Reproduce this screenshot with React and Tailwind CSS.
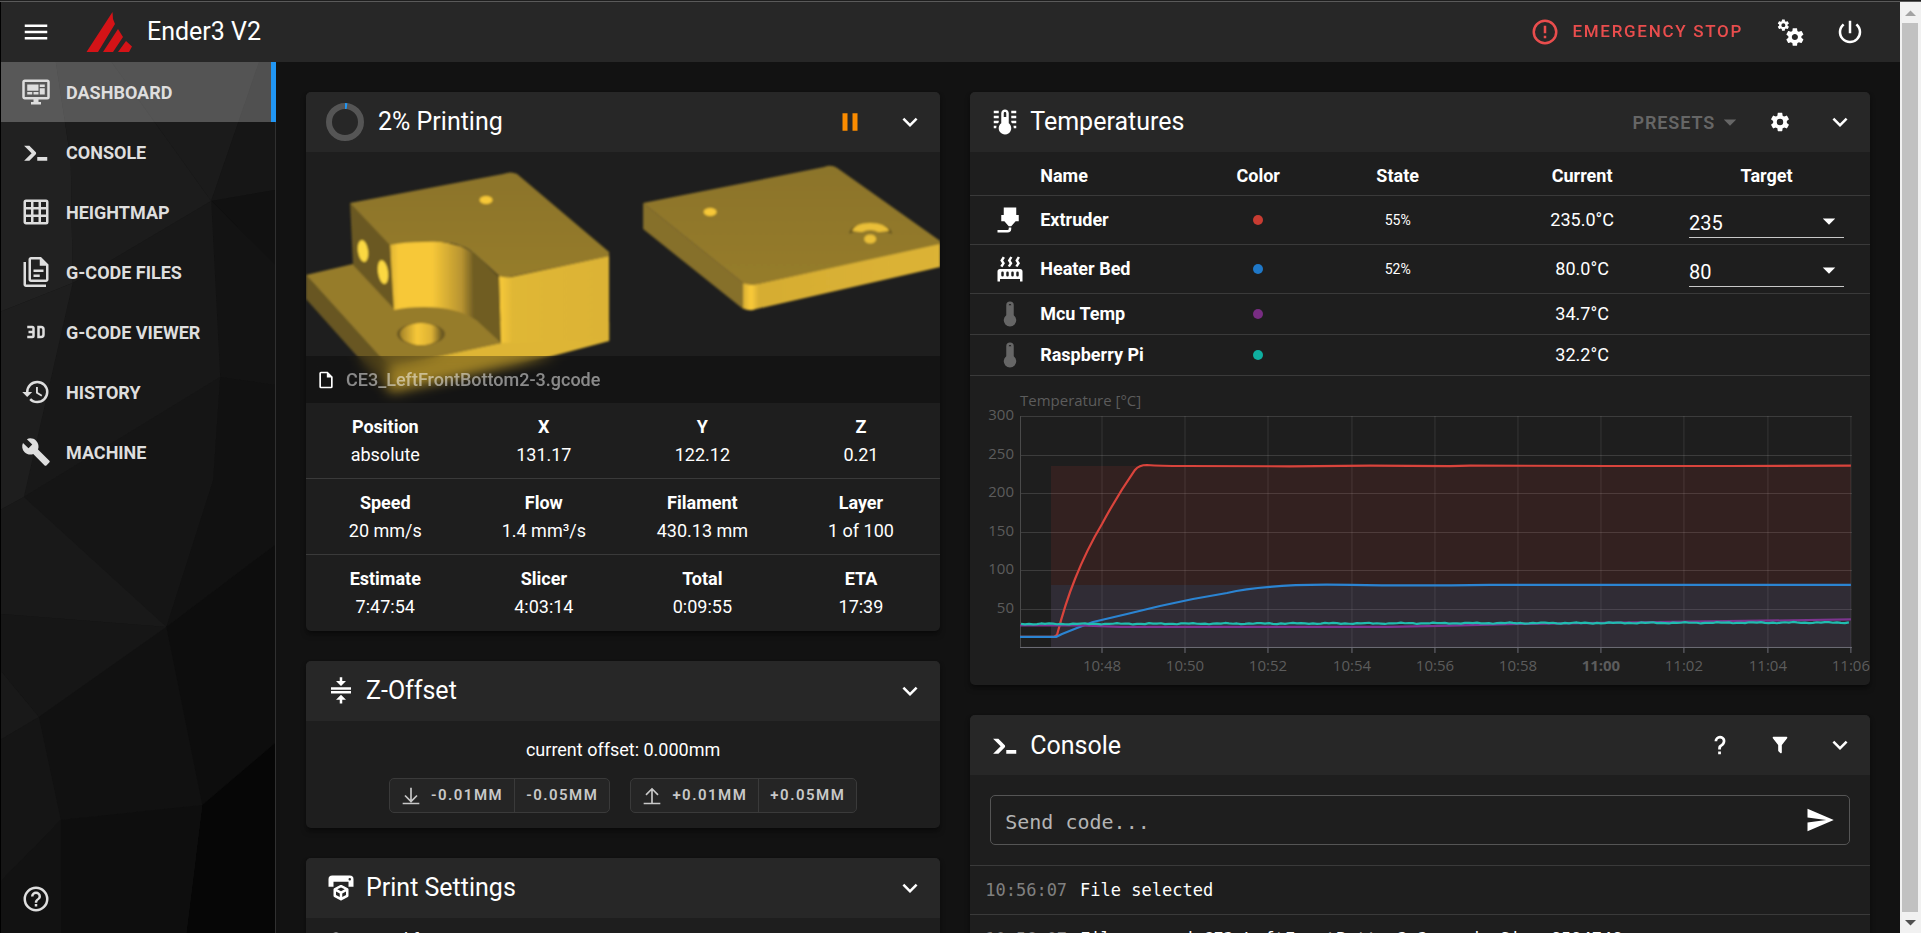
import React from "react";

const icons = {
  menu: "M3,6H21V8H3V6M3,11H21V13H3V11M3,16H21V18H3V16Z",
  dashboard:
    "M21,16V4H3V16H21M21,2A2,2 0 0,1 23,4V16A2,2 0 0,1 21,18H14V20H16V22H8V20H10V18H3C1.89,18 1,17.1 1,16V4C1,2.89 1.89,2 3,2H21M5,6H14V11H5V6M15,6H19V8H15V6M19,9V14H15V9H19M5,12H9V14H5V12M10,12H14V14H10V12Z",
  console:
    "M13,19V16H21V19H13M8.5,13L2.47,7H6.71L11.67,11.95C12.25,12.54 12.25,13.5 11.67,14.07L6.74,19H2.5L8.5,13Z",
  grid: "M10,4V8H14V4H10M16,4V8H20V4H16M16,10V14H20V10H16M16,16V20H20V16H16M14,20V16H10V20H14M8,20V16H4V20H8M8,14V10H4V14H8M8,8V4H4V8H8M10,14H14V10H10V14M4,2H20A2,2 0 0,1 22,4V20A2,2 0 0,1 20,22H4C2.92,22 2,21.1 2,20V4A2,2 0 0,1 4,2Z",
  files:
    "M16 0H8C6.9 0 6 .9 6 2V18C6 19.1 6.9 20 8 20H20C21.1 20 22 19.1 22 18V6L16 0M20 18H8V2H15V7H20V18M4 4V22H20V24H4C2.9 24 2 23.1 2 22V4H4M10 10V12H18V10H10M10 14V16H15V14H10Z",
  video3d:
    "M5,7H9A2,2 0 0,1 11,9V15A2,2 0 0,1 9,17H5V15H9V13H6V11H9V9H5V7M13,7H16A3,3 0 0,1 19,10V14A3,3 0 0,1 16,17H13V7M16,15A1,1 0 0,0 17,14V10A1,1 0 0,0 16,9H15V15H16Z",
  history:
    "M13.5,8H12V13L16.28,15.54L17,14.33L13.5,12.25V8M13,3A9,9 0 0,0 4,12H1L4.96,16.03L9,12H6A7,7 0 0,1 13,5A7,7 0 0,1 20,12A7,7 0 0,1 13,19C11.07,19 9.32,18.21 8.06,16.94L6.64,18.36C8.27,20 10.5,21 13,21A9,9 0 0,0 22,12A9,9 0 0,0 13,3",
  wrench:
    "M22.7,19L13.6,9.9C14.5,7.6 14,4.9 12.1,3C10.1,1 7.1,0.6 4.7,1.7L9,6L6,9L1.6,4.7C0.4,7.1 0.9,10.1 2.9,12.1C4.8,14 7.5,14.5 9.8,13.6L18.9,22.7C19.3,23.1 19.9,23.1 20.3,22.7L22.6,20.4C23.1,20 23.1,19.3 22.7,19Z",
  helpCircle:
    "M11,18H13V16H11V18M12,2A10,10 0 0,0 2,12A10,10 0 0,0 12,22A10,10 0 0,0 22,12A10,10 0 0,0 12,2M12,20C7.59,20 4,16.41 4,12C4,7.59 7.59,4 12,4C16.41,4 20,7.59 20,12C20,16.41 16.41,20 12,20M12,6A4,4 0 0,0 8,10H10A2,2 0 0,1 12,8A2,2 0 0,1 14,10C14,12 11,11.75 11,15H13C13,12.75 16,12.5 16,10A4,4 0 0,0 12,6Z",
  alert:
    "M11,15H13V17H11V15M11,7H13V13H11V7M12,2C6.47,2 2,6.5 2,12A10,10 0 0,0 12,22A10,10 0 0,0 22,12A10,10 0 0,0 12,2M12,20A8,8 0 0,1 4,12A8,8 0 0,1 12,4A8,8 0 0,1 20,12A8,8 0 0,1 12,20Z",
  cogs: "M15.9,18.45C17.25,18.45 18.35,17.35 18.35,16C18.35,14.65 17.25,13.55 15.9,13.55C14.54,13.55 13.45,14.65 13.45,16C13.45,17.35 14.54,18.45 15.9,18.45M21.1,16.68L22.58,17.84C22.71,17.95 22.75,18.13 22.66,18.29L21.26,20.71C21.17,20.86 21,20.92 20.83,20.86L19.09,20.16C18.73,20.44 18.33,20.67 17.91,20.85L17.64,22.7C17.62,22.87 17.47,23 17.3,23H14.5C14.32,23 14.18,22.87 14.15,22.7L13.89,20.85C13.46,20.67 13.07,20.44 12.71,20.16L10.96,20.86C10.81,20.92 10.62,20.86 10.54,20.71L9.14,18.29C9.05,18.13 9.09,17.95 9.22,17.84L10.7,16.68L10.65,16L10.7,15.31L9.22,14.16C9.09,14.05 9.05,13.86 9.14,13.71L10.54,11.29C10.62,11.13 10.81,11.07 10.96,11.13L12.71,11.84C13.07,11.56 13.46,11.32 13.89,11.15L14.15,9.29C14.18,9.13 14.32,9 14.5,9H17.3C17.47,9 17.62,9.13 17.64,9.29L17.91,11.15C18.33,11.32 18.73,11.56 19.09,11.84L20.83,11.13C21,11.07 21.17,11.13 21.26,11.29L22.66,13.71C22.75,13.86 22.71,14.05 22.58,14.16L21.1,15.31L21.15,16L21.1,16.68M6.69,8.07C7.56,8.07 8.26,7.37 8.26,6.5C8.26,5.63 7.56,4.92 6.69,4.92A1.58,1.58 0 0,0 5.11,6.5C5.11,7.37 5.82,8.07 6.69,8.07M10.03,6.94L11,7.68C11.07,7.75 11.09,7.87 11.03,7.97L10.13,9.53C10.08,9.63 9.96,9.67 9.86,9.63L8.74,9.18L8,9.62L7.81,10.81C7.79,10.92 7.7,11 7.59,11H5.79C5.67,11 5.58,10.92 5.56,10.81L5.4,9.62L4.64,9.18L3.52,9.63C3.41,9.67 3.3,9.63 3.24,9.53L2.34,7.97C2.28,7.87 2.31,7.75 2.39,7.68L3.34,6.94L3.31,6.5L3.34,6.06L2.39,5.32C2.31,5.25 2.28,5.13 2.34,5.03L3.24,3.47C3.3,3.37 3.41,3.33 3.52,3.37L4.63,3.82L5.4,3.38L5.56,2.19C5.58,2.08 5.67,2 5.79,2H7.59C7.7,2 7.79,2.08 7.81,2.19L8,3.38L8.74,3.82L9.86,3.37C9.96,3.33 10.08,3.37 10.13,3.47L11.03,5.03C11.09,5.13 11.07,5.25 11,5.32L10.03,6.06L10.06,6.5L10.03,6.94Z",
  power:
    "M13,3H11V13H13V3M17.83,5.17L16.41,6.59C18.05,7.91 19,9.9 19,12A7,7 0 0,1 12,19C8.14,19 5,15.88 5,12C5,9.91 5.95,7.91 7.58,6.58L6.17,5.17C2.38,8.39 1.92,14.07 5.14,17.86C8.36,21.64 14.04,22.1 17.83,18.88C19.85,17.17 21,14.65 21,12C21,9.37 19.84,6.87 17.83,5.17Z",
  chevron: "M7.41,8.58L12,13.17L16.59,8.58L18,10L12,16L6,10L7.41,8.58Z",
  pause: "M14,19H18V5H14M6,19H10V5H6V19Z",
  cog: "M12,15.5A3.5,3.5 0 0,1 8.5,12A3.5,3.5 0 0,1 12,8.5A3.5,3.5 0 0,1 15.5,12A3.5,3.5 0 0,1 12,15.5M19.43,12.97C19.47,12.65 19.5,12.33 19.5,12C19.5,11.67 19.47,11.34 19.43,11L21.54,9.37C21.73,9.22 21.78,8.95 21.66,8.73L19.66,5.27C19.54,5.05 19.27,4.96 19.05,5.05L16.56,6.05C16.04,5.66 15.5,5.32 14.87,5.07L14.5,2.42C14.46,2.18 14.25,2 14,2H10C9.75,2 9.54,2.18 9.5,2.42L9.13,5.07C8.5,5.32 7.96,5.66 7.44,6.05L4.95,5.05C4.73,4.96 4.46,5.05 4.34,5.27L2.34,8.73C2.21,8.95 2.27,9.22 2.46,9.37L4.57,11C4.53,11.34 4.5,11.67 4.5,12C4.5,12.33 4.53,12.65 4.57,12.97L2.46,14.63C2.27,14.78 2.21,15.05 2.34,15.27L4.34,18.73C4.46,18.95 4.73,19.03 4.95,18.95L7.44,17.94C7.96,18.34 8.5,18.68 9.13,18.93L9.5,21.58C9.54,21.82 9.75,22 10,22H14C14.25,22 14.46,21.82 14.5,21.58L14.87,18.93C15.5,18.67 16.04,18.34 16.56,17.94L19.05,18.95C19.27,19.03 19.54,18.95 19.66,18.73L21.66,15.27C21.78,15.05 21.73,14.78 21.54,14.63L19.43,12.97Z",
  collapseVertical:
    "M4,12H20V14H4V12M4,9H20V11H4V9M16,4L12,8L8,4H11V1H13V4H16M8,19L12,15L16,19H13V22H11V19H8Z",
  printer3d:
    "M19,6A1,1 0 0,0 20,5A1,1 0 0,0 19,4A1,1 0 0,0 18,5A1,1 0 0,0 19,6M19,2A3,3 0 0,1 22,5V11H18V7H6V11H2V5A3,3 0 0,1 5,2H19M18,18.25C18,18.63 17.79,18.96 17.47,19.13L12.57,21.82C12.4,21.94 12.21,22 12,22C11.79,22 11.59,21.94 11.43,21.82L6.53,19.13C6.21,18.96 6,18.63 6,18.25V13C6,12.62 6.21,12.29 6.53,12.12L11.43,9.68C11.59,9.56 11.79,9.5 12,9.5C12.21,9.5 12.4,9.56 12.57,9.68L17.47,12.12C17.79,12.29 18,12.62 18,13V18.25M12,11.65L9.04,13L12,14.6L14.96,13L12,11.65M8,17.66L11,19.29V16.33L8,14.71V17.66M16,17.66V14.71L13,16.33V19.29L16,17.66Z",
  thermometerLines:
    "M17 3H21V5H17V3M17 7H21V9H17V7M17 11H21V13H17.75L17 12.1V11M21 15V17H19C19 16.31 18.9 15.63 18.71 15H21M7 3V5H3V3H7M7 7V9H3V7H7M7 11V12.1L6.25 13H3V11H7M3 15H5.29C5.1 15.63 5 16.31 5 17H3V15M15 13V5C15 3.34 13.66 2 12 2S9 3.34 9 5V13C6.79 14.66 6.34 17.79 8 20S12.79 22.66 15 21 17.66 16.21 16 14C15.72 13.62 15.38 13.28 15 13M12 4C12.55 4 13 4.45 13 5V8H11V5C11 4.45 11.45 4 12 4Z",
  nozzle:
    "M7,2H17V8H19V13H16.5L13,17H11L7.5,13H5V8H7V2M10,22H2V20H10A1,1 0 0,0 11,19V18H13V19A3,3 0 0,1 10,22Z",
  radiator:
    "M7.95,3L6.53,5.19L7.95,7.4H7.94L5.95,10.5L4.22,9.6L5.64,7.39L4.22,5.19L6.22,2.09L7.95,3M13.95,2.89L12.53,5.1L13.95,7.3L13.94,7.31L11.95,10.4L10.22,9.5L11.64,7.3L10.22,5.1L12.22,2L13.95,2.89M20,2.89L18.56,5.1L20,7.3V7.31L18,10.4L16.25,9.5L17.67,7.3L16.25,5.1L18.25,2L20,2.89M2,22V14A2,2 0 0,1 4,12H20A2,2 0 0,1 22,14V22H20V20H4V22H2M6,14A1,1 0 0,0 5,15V17A1,1 0 0,0 6,18A1,1 0 0,0 7,17V15A1,1 0 0,0 6,14M10,14A1,1 0 0,0 9,15V17A1,1 0 0,0 10,18A1,1 0 0,0 11,17V15A1,1 0 0,0 10,14M14,14A1,1 0 0,0 13,15V17A1,1 0 0,0 14,18A1,1 0 0,0 15,17V15A1,1 0 0,0 14,14M18,14A1,1 0 0,0 17,15V17A1,1 0 0,0 18,18A1,1 0 0,0 19,17V15A1,1 0 0,0 18,14Z",
  thermometer: "M15 13V5A3 3 0 0 0 9 5V13A5 5 0 1 0 15 13M12 4A1 1 0 0 1 13 5H11A1 1 0 0 1 12 4Z",
  file: "M14,2H6A2,2 0 0,0 4,4V20A2,2 0 0,0 6,22H18A2,2 0 0,0 20,20V8L14,2M18,20H6V4H13V9H18V20Z",
  arrowDown: "M19.92,12.08L12,20L4.08,12.08L5.5,10.67L11,16.17V2H13V16.17L18.5,10.66L19.92,12.08M12,20H2V22H22V20H12Z",
  arrowUp: "M4.08,9.92L12,2L19.92,9.92L18.5,11.33L13,5.83V20H22V22H2V20H11V5.83L5.5,11.34L4.08,9.92Z",
  help: "M10,19H13V22H10V19M12,2C17.35,2.22 19.68,7.62 16.5,11.67C15.67,12.67 14.33,13.33 13.67,14.17C13,15 13,16 13,17H10C10,15.33 10,13.92 10.67,12.92C11.33,11.92 12.67,11.33 13.5,10.67C15.92,8.43 15.32,5.26 12,5A3,3 0 0,0 9,8H6A6,6 0 0,1 12,2Z",
  filter:
    "M14,12V19.88C14.04,20.18 13.94,20.5 13.71,20.71C13.32,21.1 12.69,21.1 12.3,20.71L10.29,18.7C10.06,18.47 9.96,18.16 10,17.87V12H9.97L4.21,4.62C3.87,4.19 3.95,3.56 4.38,3.22C4.57,3.08 4.78,3 5,3V3H19V3C19.22,3 19.43,3.08 19.62,3.22C20.05,3.56 20.13,4.19 19.79,4.62L14.03,12H14Z",
  send: "M2,21L23,12L2,3V10L17,12L2,14V21Z",
  menuDown: "M7,10L12,15L17,10H7Z",
  speedometer:
    "M12,16A3,3 0 0,1 9,13C9,11.88 9.61,10.9 10.5,10.39L20.21,4.77L14.68,14.35C14.18,15.33 13.17,16 12,16M12,3C13.81,3 15.5,3.5 16.97,4.32L14.87,5.53C14,5.19 13,5 12,5A8,8 0 0,0 4,13C4,15.21 4.89,17.21 6.34,18.65C6.73,19.04 6.73,19.67 6.34,20.06C5.95,20.45 5.32,20.45 4.93,20.07C3.12,18.26 2,15.76 2,13A10,10 0 0,1 12,3Z",
};

function Icon({ name, className = "size-[30px]" }) {
  return (
    <svg viewBox="0 0 24 24" fill="currentColor" aria-hidden="true" className={`shrink-0 ${className}`}>
      <path d={icons[name]} />
    </svg>
  );
}

function IconButton({ name, label, iconClass, className = "" }) {
  return (
    <button type="button" aria-label={label} className={`flex size-[60px] shrink-0 items-center justify-center ${className}`}>
      <Icon name={name} className={iconClass} />
    </button>
  );
}

function Card({ icon, title, actions, children }) {
  return (
    <section className="shrink-0 overflow-hidden rounded-[5px] bg-[#1e1e1e] shadow-md shadow-black/40">
      <header className="flex h-[60px] items-center bg-[#272727] pl-5">
        {icon}
        <h2 className="grow text-[25px]">{title}</h2>
        {actions}
        <IconButton name="chevron" label={`Collapse ${title}`} />
      </header>
      {children}
    </section>
  );
}

const nav = [
  ["dashboard", "Dashboard"],
  ["console", "Console"],
  ["grid", "Heightmap"],
  ["files", "G-Code Files"],
  ["video3d", "G-Code Viewer"],
  ["history", "History"],
  ["wrench", "Machine"],
];

const facets = [
  ["0,62 56,62 71,160 73,283 0,312", "#212121"],
  ["56,62 112,62 212,201 73,283 71,160", "#1c1c1c"],
  ["112,62 260,62 212,201", "#1b1b1b"],
  ["260,62 276,62 276,190 212,201", "#161616"],
  ["212,201 276,190 276,265", "#111111"],
  ["212,201 276,265 276,385 221,377", "#131313"],
  ["73,283 212,201 221,377 24,497", "#181818"],
  ["0,312 73,283 24,497 0,510", "#1e1e1e"],
  ["24,497 221,377 214,480 167,627", "#151515"],
  ["221,377 276,385 276,545 167,627 214,480", "#111111"],
  ["0,510 24,497 167,627 0,614", "#191919"],
  ["0,614 167,627 39,717 0,670", "#161616"],
  ["0,670 39,717 0,740", "#191919"],
  ["39,717 167,627 203,805 61,820", "#111111"],
  ["167,627 276,545 276,743 203,805", "#0d0d0d"],
  ["203,805 276,743 276,933 187,933", "#060606"],
  ["61,820 203,805 187,933 61,933", "#0e0e0e"],
  ["0,740 39,717 61,820 0,882", "#151515"],
  ["0,882 61,820 61,933 0,933", "#121212"],
];

function Sidebar() {
  return (
    <aside className="relative flex w-[275px] shrink-0 flex-col border-r border-[#303030] bg-[#151515] text-[#dedede]">
      <svg
        viewBox="1 62 275 871"
        preserveAspectRatio="none"
        aria-hidden="true"
        className="absolute inset-0 size-full"
      >
        {facets.map(([points, fill]) => (
          <polygon key={points} points={points} fill={fill} />
        ))}
      </svg>
      <nav className="relative -mr-px flex flex-col">
        {nav.map(([icon, label], i) => (
          <a
            key={label}
            href="#"
            aria-current={i === 0 ? "page" : undefined}
            className={`flex h-[60px] items-center gap-[15px] pl-5 text-[18px] font-bold uppercase ${
              i === 0 ? "border-r-[5px] border-[#2196f3] bg-white/25" : ""
            }`}
          >
            <Icon name={icon} />
            {label}
          </a>
        ))}
      </nav>
      <button type="button" aria-label="Help" className="relative mt-auto mb-[19px] ml-5 self-start">
        <Icon name="helpCircle" />
      </button>
    </aside>
  );
}

function TopBar() {
  return (
    <header className="flex h-[60px] shrink-0 items-center bg-[#272727] pr-5 pl-5">
      <button type="button" aria-label="Toggle menu">
        <Icon name="menu" />
      </button>
      <svg viewBox="86 11 47 42" className="ml-[35px] h-[42px] w-[47px]" fill="#d41317" role="img" aria-label="Logo">
        <path d="M86.500 52L112.500 12L113 19L115 24L98 52ZM103 52L118 29L123 37L113 52ZM118 52L126 41L132 46.500L129 52Z" />
      </svg>
      <h1 className="ml-[14px] grow text-[25px]">Ender3 V2</h1>
      <button type="button" className="mr-[17px] flex items-center gap-3 text-[17px] font-medium tracking-widest text-[#ff5252] uppercase opacity-90">
        <Icon name="alert" />
        Emergency Stop
      </button>
      <IconButton name="cogs" label="Interface settings" />
      <IconButton name="power" label="Power" />
    </header>
  );
}

function Thumbnail() {
  return (
    <svg viewBox="0 0 634 251" className="block w-full" role="img" aria-label="Model preview">
      <defs>
        <linearGradient id="bore" x1="84" x2="168" y1="0" y2="0" gradientUnits="userSpaceOnUse">
          <stop offset="0" stopColor="#dfb434" />
          <stop offset="0.1" stopColor="#f7c838" />
          <stop offset="0.5" stopColor="#f7c838" />
          <stop offset="0.85" stopColor="#b89430" />
          <stop offset="1" stopColor="#705d24" />
        </linearGradient>
        <linearGradient id="hole" x1="0" x2="1">
          <stop offset="0" stopColor="#a58429" />
          <stop offset="0.4" stopColor="#f7c838" />
          <stop offset="0.75" stopColor="#dcb134" />
          <stop offset="1" stopColor="#6a5822" />
        </linearGradient>
        <linearGradient id="top" x1="0" x2="0" y1="0" y2="1">
          <stop offset="0" stopColor="#8c742b" />
          <stop offset="1" stopColor="#967c2b" />
        </linearGradient>
        <linearGradient id="front" x1="193" x2="303" y1="0" y2="0" gradientUnits="userSpaceOnUse">
          <stop offset="0" stopColor="#f9ca39" />
          <stop offset="0.12" stopColor="#e0b736" />
          <stop offset="1" stopColor="#dcb335" />
        </linearGradient>
        <linearGradient id="plateFront" x1="437" x2="634" y1="0" y2="0" gradientUnits="userSpaceOnUse">
          <stop offset="0" stopColor="#d8ae34" />
          <stop offset="0.04" stopColor="#fbcb3a" />
          <stop offset="0.08" stopColor="#d6ad33" />
          <stop offset="1" stopColor="#dcb335" />
        </linearGradient>
        <filter id="soft">
          <feGaussianBlur stdDeviation="0.900" />
        </filter>
      </defs>
      <g filter="url(#soft)">
        <polygon points="0,123 47,112 88,110 150,120 195,170 195,191 83,215" fill="#967c2b" />
        <polygon points="0,123 83,215 83,240 0,147" fill="#675623" />
        <polygon points="83,215 195,191 303,170 303,189 243,205 90,240 83,240" fill="#deb535" />
        <polygon points="44,51 84,92 89,158 47,113" fill="#6b5923" />
        <path d="M84 92Q100 88 130 89Q155 92 168 101L170 168Q150 155 118 155Q100 155 88 158Z" fill="url(#bore)" />
        <path d="M166 99L193 125L195 191L168 166Z" fill="#705d24" />
        <path d="M44 51L197 22Q205 19 211 22L303 100L303 104L203 125Q197 127 193 124L168 101Q152 88 118 90Q98 90 84 93Z" fill="url(#top)" />
        <path d="M193 124Q198 126 205 125L303 104L303 189L195 191Z" fill="url(#front)" />
        <ellipse cx="57" cy="99" rx="5" ry="11" fill="#fbd842" transform="rotate(-8 57 99)" />
        <ellipse cx="77" cy="120" rx="5" ry="12" fill="#fbd842" transform="rotate(-8 77 120)" />
        <ellipse cx="115" cy="182" rx="24" ry="11" fill="#6a5822" />
        <ellipse cx="115" cy="182" rx="21" ry="11" fill="url(#hole)" />
        <ellipse cx="180" cy="48" rx="6.500" ry="4" fill="#f7c838" />
        <polygon points="337,51 437,131 446,158 437,157 337,77" fill="#86702a" />
        <path d="M337 51L518 15Q525 12 531 16L634 89L634 93L452 132Q444 134 437 131Z" fill="url(#top)" />
        <path d="M437 131Q444 134 452 132L634 92L634 115L450 157Q443 160 437 156Z" fill="url(#plateFront)" />
        <ellipse cx="404" cy="60" rx="6.500" ry="4" fill="#f7c838" />
        <path d="M543 82Q543 72 564 72Q585 72 586 82Q580 80 580 80Q564 75 548 80Z" fill="#6a5822" />
        <path d="M546 79Q549 71 564 71Q579 71 583 79Q574 80 572 80Q564 76 556 80Q552 80 546 79Z" fill="#eabf38" />
        <ellipse cx="564" cy="87" rx="6" ry="4.500" fill="#eabf38" />
      </g>
    </svg>
  );
}

const stats = [
  [["Position", "absolute"], ["X", "131.17"], ["Y", "122.12"], ["Z", "0.21"]],
  [["Speed", "20 mm/s"], ["Flow", "1.4 mm³/s"], ["Filament", "430.13 mm"], ["Layer", "1 of 100"]],
  [["Estimate", "7:47:54"], ["Slicer", "4:03:14"], ["Total", "0:09:55"], ["ETA", "17:39"]],
];

function PrintCard() {
  return (
    <Card
      title="2% Printing"
      icon={
        <svg viewBox="0 0 38 38" className="mr-[14px] size-[38px] shrink-0" fill="none" strokeWidth="6" aria-hidden="true">
          <circle cx="19" cy="19" r="16" stroke="#555555" />
          <path d="M19 3A16 16 0 0 1 21 3.130" stroke="#2196f3" />
        </svg>
      }
      actions={<IconButton name="pause" label="Pause print" iconClass="size-[30px] text-[#fb8c00]" />}
    >
      <div className="relative">
        <Thumbnail />
        <div className="absolute inset-x-0 bottom-0 flex h-[47px] items-center gap-[10px] bg-black/30 pl-[10px] text-[18px] font-medium backdrop-blur-[6px]">
          <Icon name="file" className="size-5" />
          <span className="text-white/50">CE3_LeftFrontBottom2-3.gcode</span>
        </div>
      </div>
      <div className="divide-y divide-[#3a3a3a]">
        {stats.map((row, i) => (
          <dl key={i} className="grid h-[76px] grid-cols-4 content-center text-center text-[18px] leading-[28px]">
            {row.map(([k, v]) => (
              <div key={k}>
                <dt className="font-bold">{k}</dt>
                <dd>{v}</dd>
              </div>
            ))}
          </dl>
        ))}
      </div>
    </Card>
  );
}

function OffsetGroup({ icon, values }) {
  return (
    <div className="flex divide-x divide-[#3a3a3a] overflow-hidden rounded-[5px] border border-[#3a3a3a] bg-[#252525]">
      {values.map((v, i) => (
        <button
          key={v}
          type="button"
          className="flex h-[33px] items-center gap-[10px] px-[11px] text-[15px] font-semibold tracking-widest text-[#c8c8c8] uppercase"
        >
          {i === 0 && <Icon name={icon} className="size-5" />}
          {v}
        </button>
      ))}
    </div>
  );
}

const sensors = [
  ["nozzle", "Extruder", "bg-[#c83c32]", "55%", "235.0°C", "235"],
  ["radiator", "Heater Bed", "bg-[#1f78c8]", "52%", "80.0°C", "80"],
  ["thermometer", "Mcu Temp", "bg-[#782d82]", "", "34.7°C", null],
  ["thermometer", "Raspberry Pi", "bg-[#0fafa0]", "", "32.2°C", null],
];

const xTicks = ["10:48", "10:50", "10:52", "10:54", "10:56", "10:58", "11:00", "11:02", "11:04", "11:06"];
const yTicks = [300, 250, 200, 150, 100, 50];
const tickX = (i) => 132 + Math.round(i * 83.2);
const tickY = (v) => Math.round(272.5 - v * 0.772) + 0.5;

const piLine = Array.from({ length: 208 }, (_, i) => {
  const x = 51 + i * 4;
  const wave = Math.sin(i * 2.3) * 0.35 + Math.sin(i * 0.71) * 0.35;
  return `${x},${(249 - i * 0.007 + wave).toFixed(1)}`;
}).join(" ");

function TempChart() {
  return (
    <svg viewBox="0 1 900 310" className="block w-full font-['Open_Sans','Noto_Sans',sans-serif] text-[15px]" role="img" aria-label="Temperature history">
      <g stroke="#ffffff" strokeOpacity="0.14">
        {yTicks.map((v) => (
          <line key={v} x1="50" x2="882" y1={tickY(v)} y2={tickY(v)} />
        ))}
      </g>
      <g stroke="#ffffff" strokeOpacity="0.07">
        {xTicks.map((t, i) => (
          <line key={t} x1={tickX(i)} x2={tickX(i)} y1="41" y2="272" strokeWidth="1.500" />
        ))}
      </g>
      <rect x="81" y="91" width="800" height="181" fill="#f44336" fillOpacity="0.1" />
      <rect x="81" y="210" width="800" height="62" fill="#2196f3" fillOpacity="0.1" />
      <g stroke="#6e6e78">
        <line x1="50" x2="882" y1="272.500" y2="272.500" />
        {xTicks.map((t, i) => (
          <line key={t} x1={tickX(i)} x2={tickX(i)} y1="272" y2="278" />
        ))}
      </g>
      <line x1="50.500" x2="50.500" y1="41" y2="272" stroke="#4a4a4a" />
      <g fill="none" strokeWidth="2.200" strokeLinejoin="round">
        <path d="M50 262H84L87 260Q95 229 105 204Q117 174 132 149Q147 121 165 95Q169 90 177 90Q190 91 214 91L320 91.300L400 90.700L480 91.200L500 90.600L640 91L760 91L881 90.700" stroke="#d9443c" />
        <path d="M50 262H86L92 259L107 253L123 247L157 239L190 231L223 224L257 218Q275 214 300 212Q330 209 381 210Q440 211 520 210H881" stroke="#2b84d2" />
        <path d="M50 250.500H110L150 252H420L470 251L550 249L630 248L881 244.500" stroke="#7d3590" />
        <polyline points={piLine} stroke="#20bdb0" />
      </g>
      <g fill="#5c5c5c">
        <text x="50" y="31">Temperature [°C]</text>
        {yTicks.map((v) => (
          <text key={v} x="44" y={tickY(v) + 4} textAnchor="end">
            {v}
          </text>
        ))}
        {xTicks.map((t, i) => (
          <text key={t} x={tickX(i)} y="296" textAnchor="middle" fontWeight={t === "11:00" ? 700 : 400}>
            {t}
          </text>
        ))}
      </g>
    </svg>
  );
}

function TemperatureCard() {
  return (
    <Card
      title="Temperatures"
      icon={<Icon name="thermometerLines" className="mr-[10px] size-[30px]" />}
      actions={
        <>
          <button type="button" className="mr-[5px] flex items-center text-[18px] font-semibold tracking-wider text-[#666666] uppercase">
            Presets
            <Icon name="menuDown" />
          </button>
          <IconButton name="cog" label="Temperature settings" iconClass="size-[22px]" />
        </>
      }
    >
      <table className="w-full table-fixed text-[18px] leading-6">
        <colgroup>
          <col className="w-[6%]" />
          <col className="w-[22%]" />
          <col className="w-[8%]" />
          <col className="w-[23%]" />
          <col className="w-[18%]" />
          <col className="w-[23%]" />
        </colgroup>
        <thead>
          <tr className="h-[43px] border-b border-[#3a3a3a]">
            <th aria-label="Icon" />
            <th className="pt-[6px] pl-4 text-left">Name</th>
            <th className="pt-[6px]">Color</th>
            <th className="pt-[6px]">State</th>
            <th className="pt-[6px]">Current</th>
            <th className="pt-[6px]">Target</th>
          </tr>
        </thead>
        <tbody>
          {sensors.map(([icon, name, dot, state, current, target]) => (
            <tr key={name} className={`border-b border-[#3a3a3a] ${target ? "h-[49px]" : "h-[41px]"}`}>
              <td className={`pl-[25px] ${target ? "text-white" : "text-[#666666]"}`}>
                <Icon name={icon} />
              </td>
              <td className="pl-4 font-bold">{name}</td>
              <td>
                <span className={`mx-auto block size-[10px] rounded-full ${dot}`} />
              </td>
              <td className="text-center text-sm">{state}</td>
              <td className="text-center">{current}</td>
              <td className="px-[26px]">
                {target && (
                  <div className="relative mt-1 border-b border-[#c8c8c8]">
                    <select
                      aria-label={`${name} target`}
                      defaultValue={target}
                      className="block h-8 w-full appearance-none bg-transparent pt-1 text-xl outline-none"
                    >
                      <option>{target}</option>
                    </select>
                    <Icon name="menuDown" className="pointer-events-none absolute top-px right-0 size-[30px]" />
                  </div>
                )}
              </td>
            </tr>
          ))}
        </tbody>
      </table>
      <TempChart />
    </Card>
  );
}

const log = ["File selected", "File opened:CE3_LeftFrontBottom2-3.gcode Size:8594748"];

function ConsoleCard() {
  return (
    <Card
      title="Console"
      icon={<Icon name="console" className="mr-[10px] size-[30px]" />}
      actions={
        <>
          <IconButton name="help" label="Command help" iconClass="size-[22px]" />
          <IconButton name="filter" label="Filter" iconClass="size-[22px]" />
        </>
      }
    >
      <form className="mx-5 my-5 flex h-[50px] items-center rounded-[5px] border border-[#555555] pr-[14px] pl-[14px]">
        <input
          aria-label="Send code"
          placeholder="Send code..."
          className="grow bg-transparent pt-1 font-['DejaVu_Sans_Mono',monospace] text-xl outline-none placeholder:text-[#b4b4b4]"
        />
        <button type="button" aria-label="Send">
          <Icon name="send" />
        </button>
      </form>
      <ul className="font-['DejaVu_Sans_Mono',monospace] text-[17px]">
        {log.map((text) => (
          <li key={text} className="flex h-[49px] items-center gap-[13px] border-t border-[#3a3a3a] px-[15px]">
            <time className="text-[#808080]">10:56:07</time>
            <span className="whitespace-nowrap">{text}</span>
          </li>
        ))}
      </ul>
    </Card>
  );
}

function Scrollbar() {
  return (
    <div aria-hidden="true" className="flex w-[21px] shrink-0 flex-col bg-[#f1f1f1]">
      <svg viewBox="0 0 21 21" className="size-[21px]" fill="#a3a3a3">
        <path d="M5 14L10.500 8.500L16 14Z" />
      </svg>
      <div className="mr-[3px] ml-[2px] grow bg-[#c1c1c1]" />
      <svg viewBox="0 0 21 21" className="size-[21px]" fill="#505050">
        <path d="M5 8L10.500 13.500L16 8Z" />
      </svg>
    </div>
  );
}

export default function App() {
  return (
    <div className="flex h-screen flex-col overflow-hidden bg-[#121212] font-[Roboto,sans-serif] text-white">
      <div className="h-[2px] shrink-0 border-b border-[#5a5a5a] bg-[#1e1e1e]" />
      <div className="flex min-h-0 grow">
        <div className="flex min-w-0 grow flex-col border-l border-black">
          <TopBar />
          <div className="flex min-h-0 grow">
            <Sidebar />
            <main className="grid min-w-0 grow grid-cols-12 gap-[30px] overflow-hidden p-[30px]">
              <div className="col-span-5 flex min-h-0 flex-col gap-[30px]">
                <PrintCard />
                <Card title="Z-Offset" icon={<Icon name="collapseVertical" className="mr-[10px] size-[30px]" />}>
                  <div className="flex flex-col items-center gap-[15px] pt-4 pb-[15px] text-[18px]">
                    <p className="leading-[26px]">current offset: 0.000mm</p>
                    <div className="flex gap-5">
                      <OffsetGroup icon="arrowDown" values={["-0.01mm", "-0.05mm"]} />
                      <OffsetGroup icon="arrowUp" values={["+0.01mm", "+0.05mm"]} />
                    </div>
                  </div>
                </Card>
                <Card title="Print Settings" icon={<Icon name="printer3d" className="mr-[10px] size-[30px]" />}>
                  <div className="flex items-center gap-3 pt-[10px] pb-5 pl-5 text-[18px] leading-6">
                    <Icon name="speedometer" className="size-5" />
                    <p>Speed factor</p>
                  </div>
                </Card>
              </div>
              <div className="col-span-7 flex min-h-0 flex-col gap-[30px]">
                <TemperatureCard />
                <ConsoleCard />
              </div>
            </main>
          </div>
        </div>
        <Scrollbar />
      </div>
    </div>
  );
}
